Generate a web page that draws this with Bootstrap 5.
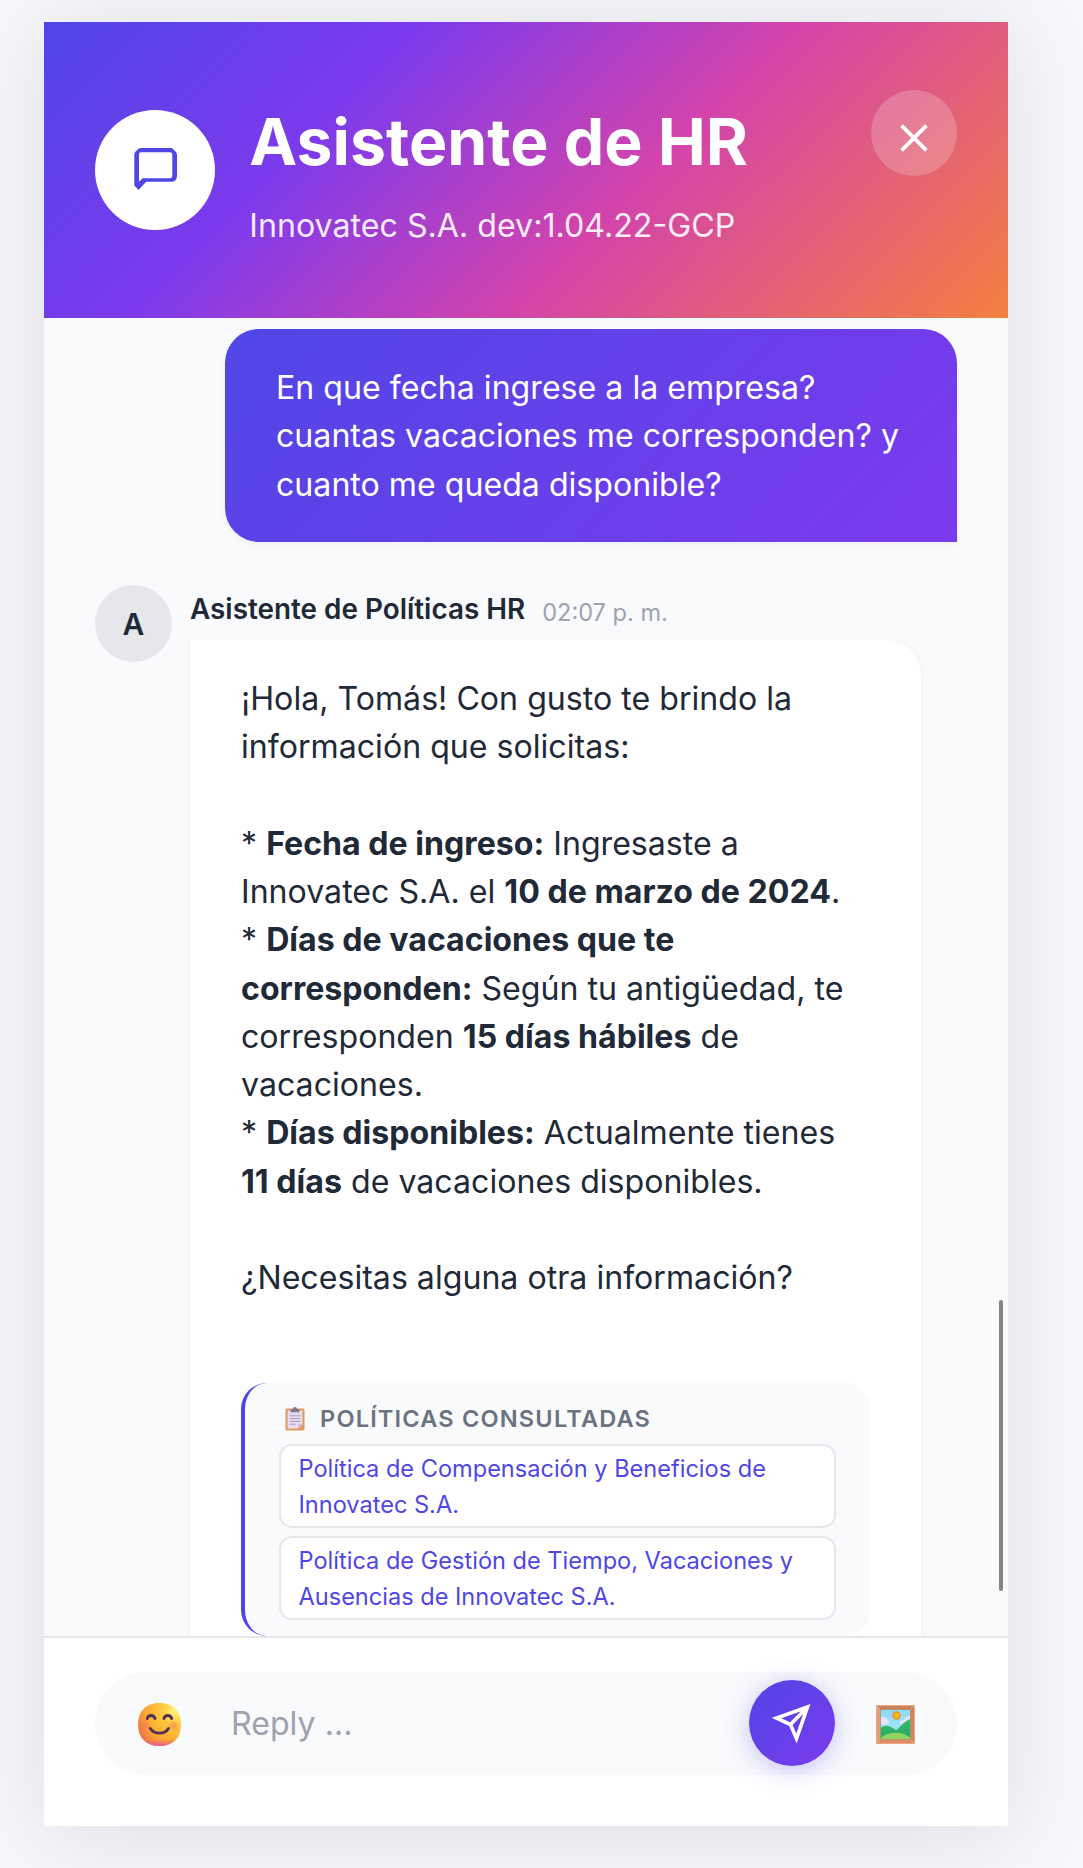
<!DOCTYPE html>
<html lang="es">
<head>
<meta charset="utf-8">
<meta name="viewport" content="width=device-width, initial-scale=1">
<title>Asistente de HR</title>
<link href="https://cdn.jsdelivr.net/npm/bootstrap@5.3.0/dist/css/bootstrap.min.css" rel="stylesheet">
<style>
  body { font-family: Inter, "Liberation Sans", sans-serif; background: #f5f7fb; color: #1f2937; height: 1868px; overflow: hidden; padding: 22px 75px 42px 44px; }
  .chat-panel { width: 964px; height: 1804px; background: #fff; box-shadow: 0 8px 86px rgba(0,0,0,.1); }
  .chat-header { height: 296px; padding: 0 51px; gap: 34.3px; background: linear-gradient(135deg, #4f46e5 0%, #7c3aed 30%, #d344ab 60%, #f3803f 100%); }
  .brand-disc { width: 120px; height: 120px; }
  .header-text { padding-top: 13px; }
  .chat-title { font-size: 64.29px; line-height: 78px; font-weight: 700; margin: 0 0 21px; }
  .chat-sub { font-size: 32.17px; line-height: 48px; opacity: .9; }
  .close-btn { width: 86px; height: 86px; margin-top: 68px; background: rgba(255,255,255,.2); padding: 10px 0 0; }
  .chat-feed { height: 1318px; background: #f9fafc; padding: 11px 51px 0; gap: 43px; }
  .bubble { width: 731px; padding: 35px 51px; font-size: 32.14px; line-height: 48.27px; box-shadow: 0 2px 6px rgba(0,0,0,.05); }
  .bubble-user { width: 732px; height: 213px; border-radius: 34px 34px 0 34px; background: linear-gradient(135deg, #4f46e5, #7c3aed); }
  .bubble-bot { border-radius: 0 34px 34px 34px; background: #fff; padding-bottom: 60px; }
  .initial-disc { width: 77px; height: 77px; background: #e5e7eb; font-size: 30px; font-weight: 600; padding-top: 1px; }
  .bot-col { width: 767px; }
  .bot-meta { height: 55px; gap: 17px; padding-top: 3px; }
  .sender { font-size: 27.86px; line-height: 42px; font-weight: 600; }
  .stamp { font-size: 23.57px; line-height: 36px; color: #9ca3af; padding-top: 7px; }
  .sources { margin-top: 80.5px; border-left: 4px solid #4f46e5; border-radius: 26px; background: #f9fafc; padding: 18px 34px 16px; height: 253px; }
  .sources-head { font-size: 23.57px; line-height: 36px; font-weight: 600; letter-spacing: 1.18px; color: #6b7280; margin-bottom: 7px; }
  .clip-icon { margin: 0 15px 0 6px; }
  .source-link { border: 2px solid #e5e7eb; border-radius: 13px; background: #fff; color: #4f46e5; font-size: 23.57px; line-height: 36px; padding: 5px 17.5px 3px; height: 84px; margin-bottom: 8px; text-decoration: none; }
  .scroll-thumb { right: 5px; top: 982px; width: 4px; height: 291px; border-radius: 2px; background: #858585; }
  .chat-footer { height: 190px; border-top: 2px solid #e5e7eb; padding: 34px 51px 0; }
  .composer { height: 103px; background: #f9fafc; padding: 0 42px 0 43px; }
  .pic-icon { margin-top: 1px; }
  .reply-input { font-size: 32.14px; color: #9ca3af; padding: 2px 0 0 50px; }
  .send-btn { width: 86px; height: 86px; margin: 0 41px 1px 0; background: linear-gradient(135deg, #4f46e5, #7c3aed); box-shadow: 0 4px 26px rgba(79,70,229,.3); }
</style>
<script src="https://cdn.jsdelivr.net/npm/bootstrap@5.3.0/dist/js/bootstrap.bundle.min.js"></script>
</head>
<body>
<main class="chat-panel d-flex flex-column">
  <header class="chat-header d-flex align-items-center text-white">
    <div class="brand-disc rounded-circle bg-white d-flex align-items-center justify-content-center flex-shrink-0">
      <svg width="52" height="52" viewBox="0 0 52 52"><path fill="#4f46e5" fill-rule="evenodd" d="M5.3 11Q5.3 9 6.6 7.6L8.7 5.400Q10 4 12.500 4H41Q43 4 44.300 5.300L46.700 7.700Q48 9 48 11V31.500Q48 37.800 42 37.800H17.200L9.500 46 5.300 41.500zM10 10.300V37.800L13.600 34.200H41Q43.300 34.200 43.300 32V10.500Q43.300 8.300 41.300 8.300H12Q10 8.300 10 10.300z"/></svg>
    </div>
    <div class="header-text flex-grow-1">
      <h1 class="chat-title">Asistente de HR</h1>
      <div class="chat-sub">Innovatec S.A. dev:1.04.22-GCP</div>
    </div>
    <button class="close-btn btn border-0 rounded-circle align-self-start d-flex align-items-center justify-content-center" aria-label="Cerrar">
      <svg class="flex-shrink-0" width="28" height="28" viewBox="0 0 28 28" stroke="#fff" stroke-width="3.8"><path d="M1.600 1.600 26.400 26.400M26.400 1.600 1.600 26.400"/></svg>
    </button>
  </header>

  <section class="chat-feed d-flex flex-column position-relative overflow-hidden">
    <div class="bubble bubble-user text-white align-self-end flex-shrink-0">En que fecha ingrese a la empresa?<br>cuantas vacaciones me corresponden? y<br>cuanto me queda disponible?</div>
    <div class="d-flex flex-shrink-0">
      <div class="initial-disc rounded-circle d-flex align-items-center justify-content-center flex-shrink-0">A</div>
      <div class="ms-auto bot-col">
        <div class="bot-meta d-flex"><span class="sender">Asistente de Políticas HR</span><span class="stamp">02:07 p. m.</span></div>
        <div class="bubble bubble-bot">
          <div>¡Hola, Tomás! Con gusto te brindo la<br>información que solicitas:<br><br>* <strong>Fecha de ingreso:</strong> Ingresaste a<br>Innovatec S.A. el <strong>10 de marzo de 2024</strong>.<br>* <strong>Días de vacaciones que te<br>corresponden:</strong> Según tu antigüedad, te<br>corresponden <strong>15 días hábiles</strong> de<br>vacaciones.<br>* <strong>Días disponibles:</strong> Actualmente tienes<br><strong>11 días</strong> de vacaciones disponibles.<br><br>¿Necesitas alguna otra información?</div>
          <div class="sources">
            <div class="sources-head d-flex align-items-center">
              <svg class="clip-icon" width="20" height="24" viewBox="0 0 20 24"><rect x=".5" y="1.5" width="19" height="22" rx="1.5" fill="#e5985f"/><path d="M2.600 3.600h14.800v13.600l-4.200 4.200H2.600z" fill="#e7dcf2"/><path d="M13.200 21.400v-4.200h4.200z" fill="#c9b5dc"/><path d="M5.600 2h2.400a2 2 0 0 1 4 0h2.400v3.200H5.600z" fill="#82788a"/><path d="M4.600 8.800h10.800M4.600 11.600h10.800M4.600 14.400h10.800M4.600 17.200h6" stroke="#a99bb5" stroke-width="1"/></svg>
              <span>POLÍTICAS CONSULTADAS</span>
            </div>
            <a class="source-link d-block">Política de Compensación y Beneficios de<br>Innovatec S.A.</a>
            <a class="source-link d-block">Política de Gestión de Tiempo, Vacaciones y<br>Ausencias de Innovatec S.A.</a>
          </div>
        </div>
      </div>
    </div>
    <div class="scroll-thumb position-absolute"></div>
  </section>

  <footer class="chat-footer">
    <div class="composer rounded-pill d-flex align-items-center">
      <svg class="pic-icon" width="43" height="43" viewBox="0 0 43 43" aria-label="Emoji">
        <defs>
          <radialGradient id="face" cx=".85" cy=".2" r="1"><stop offset="0" stop-color="#fff07a"/><stop offset=".3" stop-color="#ffc940"/><stop offset=".65" stop-color="#ffab33"/><stop offset="1" stop-color="#ec6c4c"/></radialGradient>
          <linearGradient id="jaw" x1="0" y1="0" x2="0" y2="1"><stop offset=".86" stop-color="#e25c90" stop-opacity="0"/><stop offset="1" stop-color="#df5c9c" stop-opacity=".9"/></linearGradient>
          <radialGradient id="cheek"><stop offset="0" stop-color="#ff6a60" stop-opacity=".65"/><stop offset="1" stop-color="#ff6a60" stop-opacity="0"/></radialGradient>
        </defs>
        <path d="M21.5 0C35 0 43 8 43 21.5S35 43 21.5 43 0 35 0 21.5 8 0 21.5 0z" fill="url(#face)"/>
        <path d="M21.5 0C35 0 43 8 43 21.5S35 43 21.5 43 0 35 0 21.5 8 0 21.5 0z" fill="url(#jaw)"/>
        <circle cx="8" cy="22.5" r="5.5" fill="url(#cheek)"/><circle cx="35.5" cy="22.5" r="5.5" fill="url(#cheek)"/>
        <path d="M9.300 15.500c1-4 6.400-4 7.700 0M26 15.500c1-4 6.400-4 7.700 0M12.300 25.500c4 6.200 14.500 6.200 18.200 0" fill="none" stroke="#4f3350" stroke-width="2.900" stroke-linecap="round"/>
      </svg>
      <div class="reply-input flex-grow-1">Reply ...</div>
      <button class="send-btn btn rounded-circle border-0 p-0 d-flex align-items-center justify-content-center" aria-label="Enviar">
        <svg width="40" height="40" viewBox="0 0 40 40" fill="none" stroke="#fff" stroke-width="3.6"><path d="M35.500 4 4.500 15 18.500 21.500 24.500 35.500z M35.500 4 18.500 21.500"/></svg>
      </button>
      <svg class="pic-icon" width="39" height="39" viewBox="0 0 39 39" aria-label="Imagen">
        <defs><linearGradient id="sky" x1="0" y1="0" x2="0" y2="1"><stop offset="0" stop-color="#8fd9f3"/><stop offset="1" stop-color="#a6ebfa"/></linearGradient>
        <linearGradient id="hill" x1="0" y1="0" x2="0" y2="1"><stop offset="0" stop-color="#36bd6c"/><stop offset="1" stop-color="#28a862"/></linearGradient></defs>
        <path d="M0 0h39l-5 5H5z" fill="#c9825d"/><path d="M39 0v39l-5-5V5z" fill="#d2845c"/><path d="M39 39H0l5-5h29z" fill="#df8c64"/><path d="M0 39V0l5 5v29z" fill="#e49c72"/>
        <rect x=".5" y=".5" width="38" height="38" fill="none" stroke="#eba981"/>
        <rect x="4.500" y="4.500" width="30" height="30" fill="url(#sky)"/>
        <path d="M4.500 12c4-1 7 1 7.500 3 2 1 1.500 4-1 4.500H4.500zM34.500 11c-4 0-6 2-6 3.500-4 0-6 3-4.500 4.500h10.500z" fill="#e6e1fa"/>
        <path d="M4.500 23c5-4 9-2.500 15.500 2 5-3 9-10 14.500-11v20h-30z" fill="url(#hill)"/>
        <path d="M4.500 33c8-7 22-7 30 0v1.500h-30z" fill="#8fd45f"/>
        <circle cx="20.500" cy="10.500" r="3.600" fill="#f6b91d" stroke="#ec8a25" stroke-width="1.200"/>
        <rect x="4.500" y="4.500" width="30" height="30" fill="none" stroke="#b98b68" stroke-width=".8"/>
      </svg>
    </div>
  </footer>
</main>
</body>
</html>
